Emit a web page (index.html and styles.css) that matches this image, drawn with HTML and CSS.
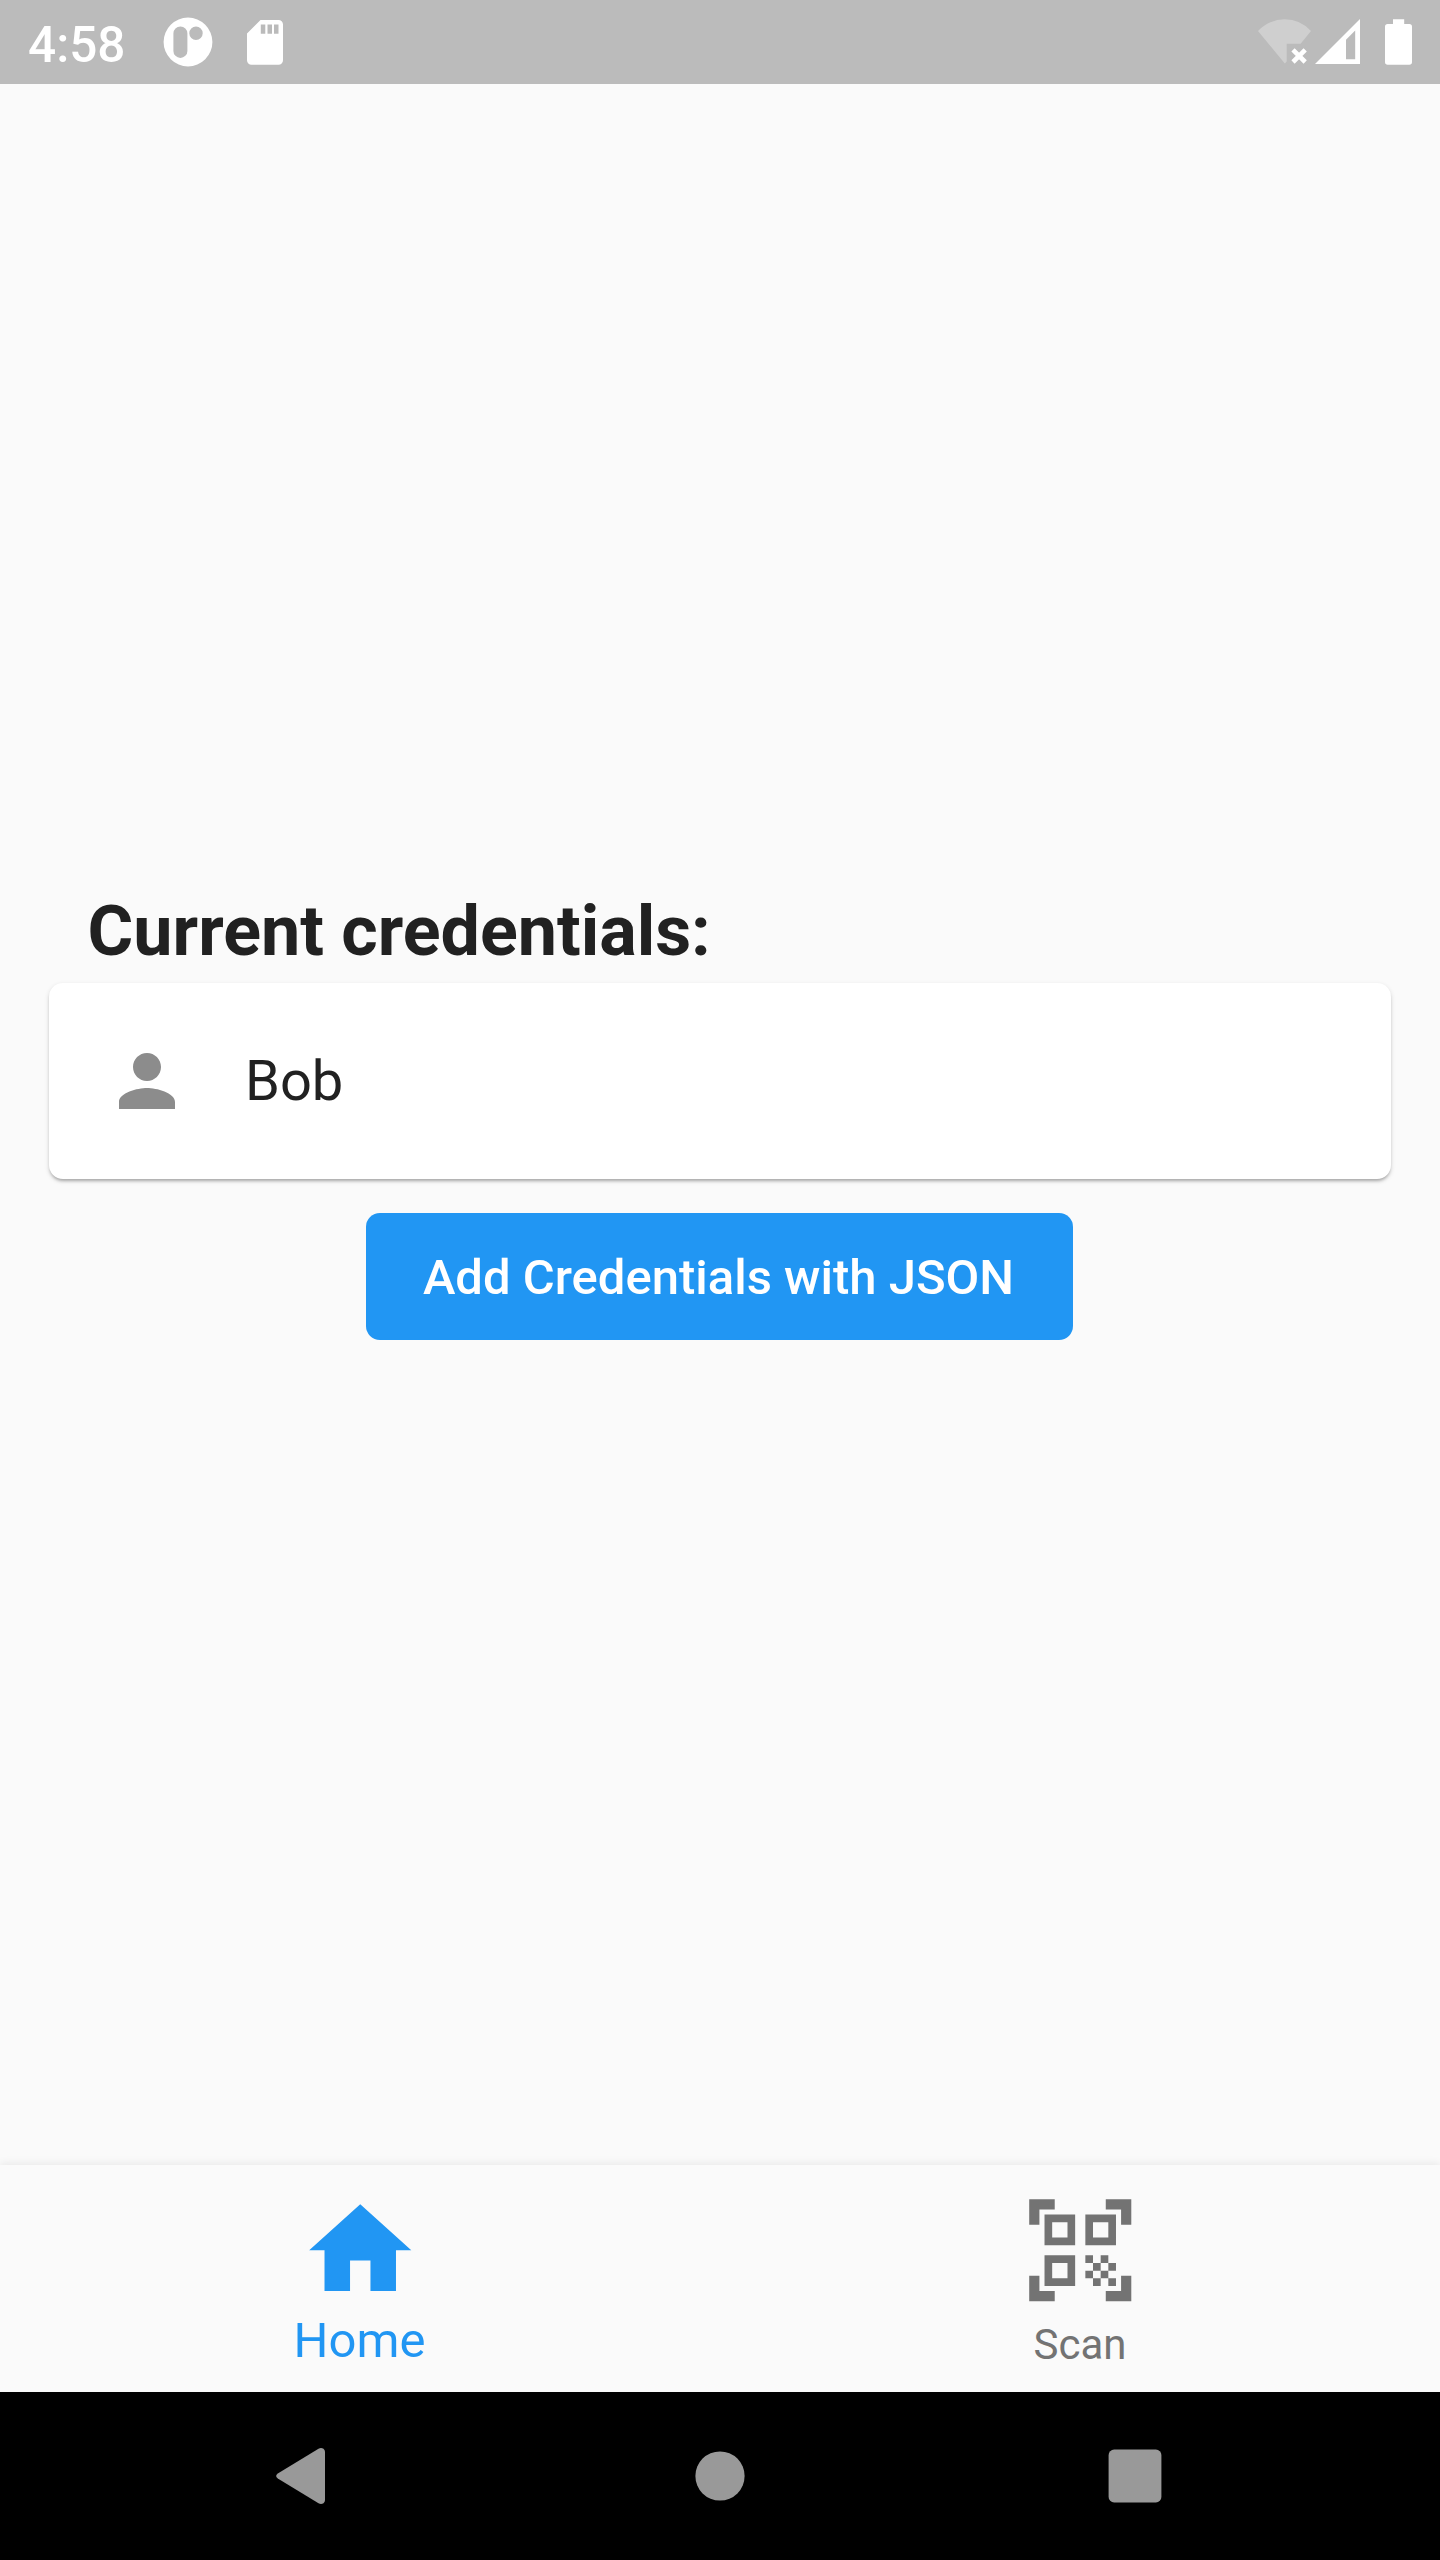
FILE: index.html
```html
<!DOCTYPE html>
<html lang="en">
<head>
<meta charset="utf-8">
<title>Credentials</title>
<link rel="stylesheet" href="styles.css">
</head>
<body>
<div class="screen">
  <header class="status">
    <div class="status-left">
      <span class="clock">4:58</span>
      <svg class="ic-app" width="50" height="50" viewBox="0 0 50 50"><path fill="#fff" fill-rule="evenodd" d="M25 .6a24.4 24.4 0 1 1 0 48.8a24.4 24.4 0 1 1 0-48.8zM17.4 9.5a7 7 0 0 0-7 7v17.4a7 7 0 0 0 14 0V16.500a7 7 0 0 0-7-7zM33 9.500a6.700 6.700 0 1 0 0 13.400a6.700 6.700 0 1 0 0-13.400z"/></svg>
      <svg class="ic-sd" width="36" height="45" viewBox="0 0 36 45"><path fill="#fff" fill-rule="evenodd" d="M13.500 0H31.500A4.500 4.500 0 0 1 36 4.500V40.200A4.500 4.500 0 0 1 31.500 44.700H4.500A4.500 4.500 0 0 1 0 40.200V13.500zM13.800 4.500V13.800H18.300V4.500zM20.500 4.500V13.800H25V4.500zM27 4.500V13.800H31.500V4.500z"/></svg>
    </div>
    <div class="status-right">
      <svg width="54" height="46" viewBox="0 0 54 46"><path fill="#cfcfcf" d="M0 12Q11.500 .3 26.800 .3T53 12L42.600 24.700H28.700V42.500L26.800 44.500z"/><path stroke="#fff" stroke-width="4.600" d="M35 30.800L47.200 43M47.200 30.800L35 43"/></svg>
      <svg class="ic-signal" width="45" height="46" viewBox="0 0 45 46"><path fill="#fff" fill-rule="evenodd" d="M45 0V45H0zM40.200 11.500L31 20.700V40.200H40.200z"/></svg>
      <svg class="ic-battery" width="27" height="46" viewBox="0 0 27 46"><path fill="#fff" d="M8 .3H19.200V5H24.300A2.700 2.700 0 0 1 27 7.700V43A2.700 2.700 0 0 1 24.300 45.700H2.700A2.700 2.700 0 0 1 0 43V7.700A2.700 2.700 0 0 1 2.700 5H8z"/></svg>
    </div>
  </header>

  <main class="content">
    <h1 class="title">Current credentials:</h1>
    <div class="card">
      <svg width="84" height="84" viewBox="0 0 24 24"><path fill="#8c8c8c" d="M12 12c2.210 0 4-1.790 4-4s-1.790-4-4-4-4 1.790-4 4 1.790 4 4 4zm0 2c-2.670 0-8 1.340-8 4v2h16v-2c0-2.660-5.330-4-8-4z"/></svg>
      <span class="name">Bob</span>
    </div>
    <button class="add">Add Credentials with JSON</button>
  </main>

  <nav class="tabs">
    <a class="tab active">
      <svg width="122.500" height="122.500" viewBox="0 0 24 24"><path fill="currentColor" d="M10 20v-6h4v6h5v-8h3L12 3 2 12h3v8z"/></svg>
      <span class="label">Home</span>
    </a>
    <a class="tab">
      <svg width="122.500" height="122.500" viewBox="0 0 24 24"><path fill="currentColor" fill-rule="evenodd" d="M2 2h5v2H4v3H2zM17 2h5v5h-2V4h-3zM2 17h2v3h3v2H2zM20 17h2v5h-5v-2h3zM5 5h6v6H5zM6.500 6.500v3h3v-3zM13 5h6v6h-6zM14.500 6.500v3h3v-3zM5 13h6v6H5zM6.500 14.500v3h3v-3zM13 13h1.500v1.500H13zM16 13h1.500v1.500H16zM14.500 14.500H16V16h-1.500zM17.500 14.500H19V16h-1.500zM13 16h1.500v1.500H13zM16 16h1.500v1.500H16zM14.500 17.500H16V19h-1.500zM17.500 17.500H19V19h-1.500z"/></svg>
      <span class="label">Scan</span>
    </a>
  </nav>

  <footer class="system">
    <svg width="50" height="56" viewBox="0 0 50 56"><path fill="#999" d="M1.800 25.400L42.500 .8Q45 -.6 47.500 .8Q49 2 49 4V52Q49 54 47.500 55.200Q45 56.600 42.500 55.200L1.800 30.600Q-1.500 28 1.800 25.400z"/></svg>
    <svg width="50" height="50" viewBox="0 0 50 50"><circle cx="25" cy="25" r="24.600" fill="#999"/></svg>
    <svg width="54" height="54" viewBox="0 0 54 54"><rect x=".6" y=".6" width="52.800" height="52.800" rx="5.500" fill="#999"/></svg>
  </footer>
</div>
</body>
</html>
```
FILE: styles.css
```css
* { box-sizing: border-box; }

body {
  margin: 0;
  background: #fafafa;
  font-family: Roboto, sans-serif;
  color: #212121;
}

svg { display: block; flex: none; }

.screen {
  display: flex;
  flex-direction: column;
  width: 1440px;
  height: 2560px;
}

.status {
  display: flex;
  justify-content: space-between;
  height: 84px;
  padding: 0 28px;
  background: #bbb;
  color: #fff;
}

.status-left,
.status-right { display: flex; align-items: center; }

.clock {
  width: 135px;
  font-size: 49.500px;
  font-weight: 500;
  line-height: 58px;
  padding-top: 5px;
}

.ic-sd { margin-left: 34px; }
.ic-signal { margin-left: 3px; }
.ic-battery { margin-left: 25px; }

.content {
  display: flex;
  flex: 1;
  flex-direction: column;
  align-items: center;
  padding: 806px 49px 0;
}

.title {
  align-self: stretch;
  margin: 0 0 11px;
  padding-left: 38.500px;
  font-size: 70px;
  font-weight: 700;
  line-height: 82px;
}

.card {
  display: flex;
  align-items: center;
  align-self: stretch;
  gap: 56px;
  height: 195.500px;
  padding: 0 56px;
  border-radius: 14px;
  background: #fff;
  box-shadow: 0 3px 3px -1px rgba(0, 0, 0, .23), 0 2px 5px rgba(0, 0, 0, .14);
}

.name {
  font-size: 56px;
  line-height: 66px;
}

.add {
  width: 707px;
  height: 127px;
  margin: 34.500px 1px 0 0;
  padding: 2px 2px 0 0;
  border: 0;
  border-radius: 14px;
  background: #2196f3;
  color: #fff;
  font: 500 49px/58px Roboto, sans-serif;
  white-space: nowrap;
}

.tabs {
  display: flex;
  height: 227.500px;
  background: #fafafa;
  box-shadow: 0 -2px 8px rgba(0, 0, 0, .07);
}

.tab {
  display: flex;
  flex: 1;
  flex-direction: column;
  align-items: center;
  padding-top: 24.500px;
  color: #737373;
}

.label {
  margin-top: 8.500px;
  font-size: 42px;
  line-height: 50px;
}

.active { color: #2196f3; }

.active .label {
  margin: .5px 1px 0 0;
  font-size: 49px;
  line-height: 58px;
}

.system {
  display: grid;
  grid-template-columns: 50px 50px 54px;
  align-items: center;
  justify-content: start;
  column-gap: 369px;
  height: 168px;
  padding-left: 276px;
  background: #000;
}

.system svg:last-child { margin-left: -6px; }
```
